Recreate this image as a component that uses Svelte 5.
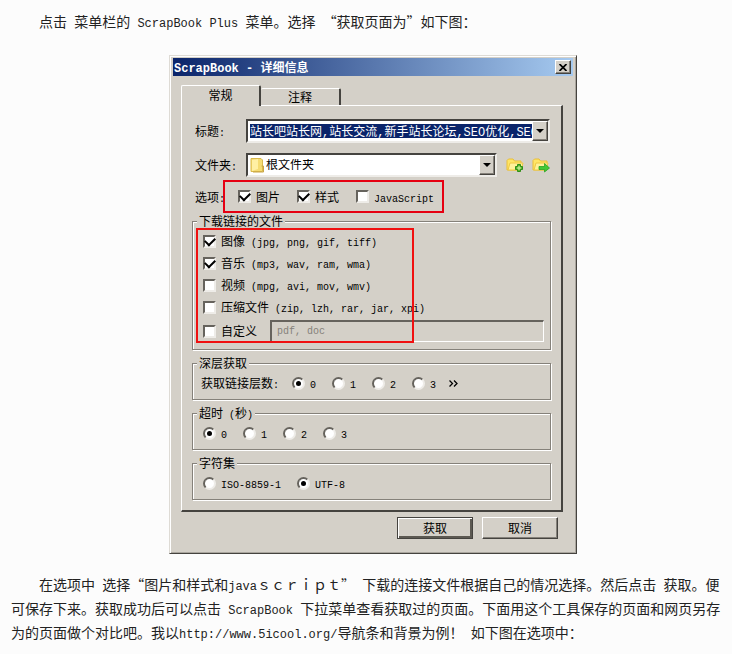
<script lang="ts">
	let tab = $state('常规');
	let title = $state('站长吧站长网,站长交流,新手站长论坛,SEO优化,SEO论坛');
	let folder = $state('根文件夹');
	let custom = $state('pdf, doc');
	let depth = $state('0');
	let timeout = $state('0');
	let charset = $state('UTF-8');

	let options = $state([
		{ label: '图片', checked: true },
		{ label: '样式', checked: true },
		{ label: 'JavaScript', checked: false }
	]);

	let fileTypes = $state([
		{ label: '图像 (jpg, png, gif, tiff)', checked: true },
		{ label: '音乐 (mp3, wav, ram, wma)', checked: true },
		{ label: '视频 (mpg, avi, mov, wmv)', checked: false },
		{ label: '压缩文件 (zip, lzh, rar, jar, xpi)', checked: false }
	]);
	let customChecked = $state(false);

	const intro = '点击 菜单栏的 ScrapBook Plus 菜单。选择 “获取页面为”如下图：';
	const outro = [
		'在选项中 选择“图片和样式和javaｓｃｒｉｐｔ” 下载的连接文件根据自己的情况选择。然后点击 获取。便',
		'可保存下来。获取成功后可以点击 ScrapBook 下拉菜单查看获取过的页面。下面用这个工具保存的页面和网页另存',
		'为的页面做个对比吧。我以http://www.5icool.org/导航条和背景为例！ 如下图在选项中：'
	];

	// split into runs of latin and chinese text
	function runs(text: string) {
		return text.match(/[\x20-\x7e]+|[^\x20-\x7e]+/g) ?? [];
	}
</script>

{#snippet mixed(text: string)}
	{#each runs(text) as run}{#if run.charCodeAt(0) < 127}<span class="en">{run}</span>{:else}{run}{/if}{/each}
{/snippet}

{#snippet check(item: { label: string; checked: boolean })}
	<label class="choice">
		<input type="checkbox" bind:checked={item.checked} />
		<span class="text">{@render mixed(item.label)}</span>
	</label>
{/snippet}

<article lang="zh-CN">
	<p>{@render mixed(intro)}</p>

	<div class="figure">
		<section class="dialog" aria-label="ScrapBook - 详细信息">
			<header>
				<h1>{@render mixed('ScrapBook - 详细信息')}</h1>
				<button class="close" aria-label="关闭">
					<svg width="8" height="7" viewBox="0 0 8 7">
						<path d="M0.5 0L7.5 7M7.5 0L0.5 7" stroke="#000" stroke-width="1.7" />
					</svg>
				</button>
			</header>

			<div class="body">
				<div class="tabs" role="tablist">
					{#each ['常规', '注释'] as name}
						<button role="tab" class:active={tab === name} aria-selected={tab === name} onclick={() => (tab = name)}>
							{name}
						</button>
					{/each}
				</div>

				<div class="panel">
					<div class="row">
						<label class="caption" for="title">{@render mixed('标题:')}</label>
						<div class="field">
							<input id="title" class="selected" type="text" bind:value={title} />
							<button class="arrow" aria-label="展开"><i></i></button>
						</div>
					</div>

					<div class="row">
						<label class="caption" for="folder">{@render mixed('文件夹:')}</label>
						<div class="field">
							<svg class="folder" width="14" height="16" viewBox="0 0 14 16">
								<path d="M1 1.5H11L12.5 3V14.5H1Z" fill="#f5dc72" stroke="#d9b84b" />
								<path d="M2 3L8 2V12L2 14Z" fill="#fff0a4" />
								<path d="M11.5 9H13.5V15H3" fill="none" stroke="#c9a545" />
							</svg>
							<select id="folder" bind:value={folder}>
								<option>根文件夹</option>
							</select>
							<span class="arrow"><i></i></span>
						</div>
						<div class="tools">
							<button aria-label="新建文件夹">
								<svg width="18" height="16" viewBox="0 0 18 16">
									<path d="M1 13V3.5L2.5 2H7L8.5 4H15V13Z" fill="#ffe566" stroke="#e9bf38" />
									<path d="M2 13L4 6H17L15 13Z" fill="#fff19a" stroke="#eec844" />
									<path d="M11.5 7.5H14.5V9.5H16.5V12.5H14.5V14.5H11.5V12.5H9.5V9.5H11.5Z" fill="#58b62b" stroke="#2f8f16" />
									<path d="M13 9V13M11 11H15" stroke="#d7f5a8" />
								</svg>
							</button>
							<button aria-label="选择文件夹">
								<svg width="18" height="16" viewBox="0 0 18 16">
									<path d="M1 13V3.5L2.5 2H7L8.5 4H15V13Z" fill="#ffe566" stroke="#e9bf38" />
									<path d="M2 13L4 6H16L14 13Z" fill="#fff19a" stroke="#eec844" />
									<path d="M7 9.5H12.5V6.5L17.5 11L12.5 15V12.5H7Z" fill="#43c837" stroke="#28a422" stroke-width="0.8" />
								</svg>
							</button>
						</div>
					</div>

					<div class="row options">
						<span class="caption short">{@render mixed('选项:')}</span>
						<div class="marked">
							{#each options as item}
								{@render check(item)}
							{/each}
						</div>
					</div>

					<fieldset>
						<legend>下载链接的文件</legend>
						<div class="files">
							{#each fileTypes as item}
								<div class="file">{@render check(item)}</div>
							{/each}
							<div class="file custom">
								<label class="choice">
									<input type="checkbox" bind:checked={customChecked} />
									<span class="text">自定义</span>
								</label>
								<input type="text" aria-label="自定义" bind:value={custom} disabled={!customChecked} />
							</div>
							<div class="mark"></div>
						</div>
					</fieldset>

					<fieldset>
						<legend>深层获取</legend>
						<div class="radios depth">
							<span>{@render mixed('获取链接层数:')}</span>
							<div class="group">
								{#each ['0', '1', '2', '3'] as n}
									<label class="choice">
										<input type="radio" name="depth" value={n} bind:group={depth} />
										<span class="text">{@render mixed(n)}</span>
									</label>
								{/each}
							</div>
							<button class="more" aria-label="更多">
								<svg width="9" height="7" viewBox="0 0 9 7">
									<path d="M0.5 0.5L3.5 3.5L0.5 6.5M5 0.5L8 3.5L5 6.5" fill="none" stroke="#000" stroke-width="1.3" />
								</svg>
							</button>
						</div>
					</fieldset>

					<fieldset>
						<legend>{@render mixed('超时 (秒)')}</legend>
						<div class="radios group">
							{#each ['0', '1', '2', '3'] as n}
								<label class="choice">
									<input type="radio" name="timeout" value={n} bind:group={timeout} />
									<span class="text">{@render mixed(n)}</span>
								</label>
							{/each}
						</div>
					</fieldset>

					<fieldset>
						<legend>字符集</legend>
						<div class="radios group">
							{#each ['ISO-8859-1', 'UTF-8'] as n}
								<label class="choice">
									<input type="radio" name="charset" value={n} bind:group={charset} />
									<span class="text">{@render mixed(n)}</span>
								</label>
							{/each}
						</div>
					</fieldset>
				</div>
			</div>

			<footer>
				<button class="default">获取</button>
				<button>取消</button>
			</footer>
		</section>
	</div>

	<p>
		{#each outro as line, i}{#if i > 0}<br />{/if}{@render mixed(line)}{/each}
	</p>
</article>

<style>
	:global(body) {
		background: #fcfcfc;
	}

	article,
	article * {
		box-sizing: border-box;
	}

	article {
		--face: #d4d0c8;
		--shade: #85817a;
		--dark: #45433f;
		padding: 9px 8px 0 11px;
		font-family: 'Noto Sans CJK SC', sans-serif;
		font-size: 14px;
		line-height: 24px;
		color: #222;
	}

	p {
		margin: 0;
		text-indent: 28px;
	}

	.en {
		font-family: 'Liberation Mono', monospace;
		font-size: 12px;
		line-height: 1;
		white-space: pre-wrap;
	}

	.figure {
		padding: 22px 0 18px 11px;
	}

	.dialog {
		max-width: 408px;
		margin: 0 auto;
		padding: 2px 3px;
		background: var(--face);
		border: 1px solid;
		border-color: #dedbd5 var(--dark) var(--dark) #dedbd5;
		box-shadow: inset 1px 1px #fff, inset -1px -1px #aaa69e;
		font-size: 12px;
		line-height: 16px;
		color: #000;
	}

	.dialog .en {
		font-size: 10px;
	}

	header {
		display: flex;
		align-items: center;
		justify-content: space-between;
		height: 18px;
		padding: 0 2px 0 1px;
		background: linear-gradient(to right, #0a246a, #a6caf0);
	}

	h1 {
		margin: 0;
		font-size: 12px;
		line-height: 16px;
		font-weight: bold;
		color: #fff;
	}

	.dialog h1 .en {
		font-size: 12px;
	}

	button {
		padding: 0;
		font: inherit;
		color: inherit;
		background: var(--face);
		border: 1px solid;
		border-color: #fff var(--dark) var(--dark) #fff;
		box-shadow: inset -1px -1px var(--shade);
	}

	.close {
		display: flex;
		align-items: center;
		justify-content: center;
		width: 16px;
		height: 14px;
	}

	.body {
		padding: 9px 10px 0 8px;
	}

	.tabs {
		display: flex;
		align-items: flex-end;
		height: 20px;
	}

	.tabs button {
		width: 80px;
		height: 17px;
		border-width: 1px 2px 0 0;
		border-color: #fff var(--dark);
		border-radius: 2px 2px 0 0;
		box-shadow: none;
	}

	.tabs .active {
		height: 21px;
		margin-bottom: -1px;
		padding-bottom: 3px;
		border-left-width: 1px;
		border-left-color: #fff;
		z-index: 1;
	}

	.panel {
		padding: 13px 10px 10px;
		border: solid;
		border-width: 1px 2px 2px 1px;
		border-color: #fff var(--dark) var(--dark) #fff;
	}

	.row {
		display: flex;
		align-items: center;
		height: 24px;
		margin-bottom: 10px;
		padding: 0 1px 0 3px;
	}

	.caption {
		flex: none;
		width: 51px;
		white-space: nowrap;
	}

	.short {
		width: 28px;
	}

	.field {
		position: relative;
		display: flex;
		flex: 1;
		min-width: 0;
		height: 24px;
		background: #fff;
		border: 2px solid;
		border-color: var(--dark) #eeece8 #eeece8 var(--dark);
	}

	.field input,
	select {
		flex: 1;
		min-width: 0;
		padding: 0;
		border: 0;
		border-radius: 0;
		outline: 0;
		font-family: 'Liberation Mono', 'Noto Sans CJK SC', monospace;
		font-size: 12px;
		color: #000;
		background: transparent;
	}

	.field .selected {
		height: 14px;
		margin: 3px 0 3px 2px;
		color: #fff;
		background: #0a246a;
	}

	select {
		appearance: none;
		padding: 2px 0 0 18px;
	}

	.folder {
		position: absolute;
		top: 2px;
		left: 2px;
	}

	.arrow {
		display: flex;
		align-items: center;
		justify-content: center;
		width: 16px;
		height: 20px;
		pointer-events: none;
		background: var(--face);
		border: 1px solid;
		border-color: #fff var(--dark) var(--dark) #fff;
		box-shadow: inset -1px -1px var(--shade);
	}

	.arrow i {
		border: 4px solid transparent;
		border-top-color: #000;
		border-bottom: 0;
	}

	.tools {
		display: flex;
		gap: 8px;
		margin-left: 9px;
	}

	.tools button,
	.more {
		display: flex;
		border: 0;
		background: none;
		box-shadow: none;
	}

	.options {
		height: 33px;
		margin: -7px 0 0;
	}

	.marked {
		display: flex;
		align-items: center;
		gap: 17px;
		height: 33px;
		padding: 0 8px 0 13px;
		border: 2px solid #e60012;
	}

	.choice {
		display: flex;
		align-items: center;
		gap: 5px;
		white-space: nowrap;
	}

	input[type='checkbox'],
	input[type='radio'] {
		appearance: none;
		flex: none;
		display: grid;
		place-items: center;
		width: 13px;
		height: 13px;
		margin: 0;
		background: #fff;
		border: 2px solid;
		border-color: #66635d #eeece8 #eeece8 #66635d;
	}

	input[type='checkbox']:checked::before {
		content: '';
		width: 8px;
		height: 5px;
		border: solid #000;
		border-width: 0 0 2px 2px;
		transform: translateY(-1px) rotate(-45deg);
	}

	input[type='radio'] {
		border-radius: 50%;
	}

	input[type='radio']:checked::before {
		content: '';
		width: 5px;
		height: 5px;
		border-radius: 50%;
		background: #000;
	}

	fieldset {
		min-width: 0;
		margin: 0 0 5px;
		padding: 0 6px 4px 8px;
		border: 1px solid var(--shade);
		box-shadow: 1px 1px #fff, inset 1px 1px #fff;
	}

	fieldset:last-child {
		margin-bottom: 0;
	}

	legend {
		height: 16px;
		margin-left: -4px;
		padding: 0 2px;
		background: var(--face);
	}

	.files {
		position: relative;
		padding: 1px 0 3px 2px;
	}

	.file {
		display: flex;
		align-items: center;
		height: 22px;
	}

	.custom {
		gap: 13px;
		margin-top: 2px;
	}

	.custom input[type='text'] {
		flex: 1;
		min-width: 0;
		height: 22px;
		padding: 0 5px;
		font-family: 'Liberation Mono', monospace;
		font-size: 10px;
		color: #85817a;
		background: var(--face);
		border: 2px solid;
		border-color: #66635d #fff #fff #66635d;
		border-width: 2px 1px 1px 2px;
	}

	.mark {
		position: absolute;
		top: -1px;
		bottom: 2px;
		left: -5px;
		width: 218px;
		border: 2px solid #f01010;
		pointer-events: none;
	}

	.radios {
		display: flex;
		align-items: center;
		height: 24px;
		padding-left: 2px;
	}

	.group {
		display: flex;
		gap: 16px;
	}

	.depth {
		gap: 13px;
		padding-left: 0;
	}

	footer {
		display: flex;
		justify-content: flex-end;
		gap: 9px;
		padding: 5px 15px 12px 0;
	}

	footer button {
		width: 76px;
		height: 22px;
	}

	footer .default {
		border-color: var(--dark);
		box-shadow: inset 1px 1px #fff, inset -2px -2px #5c5952;
	}
</style>
